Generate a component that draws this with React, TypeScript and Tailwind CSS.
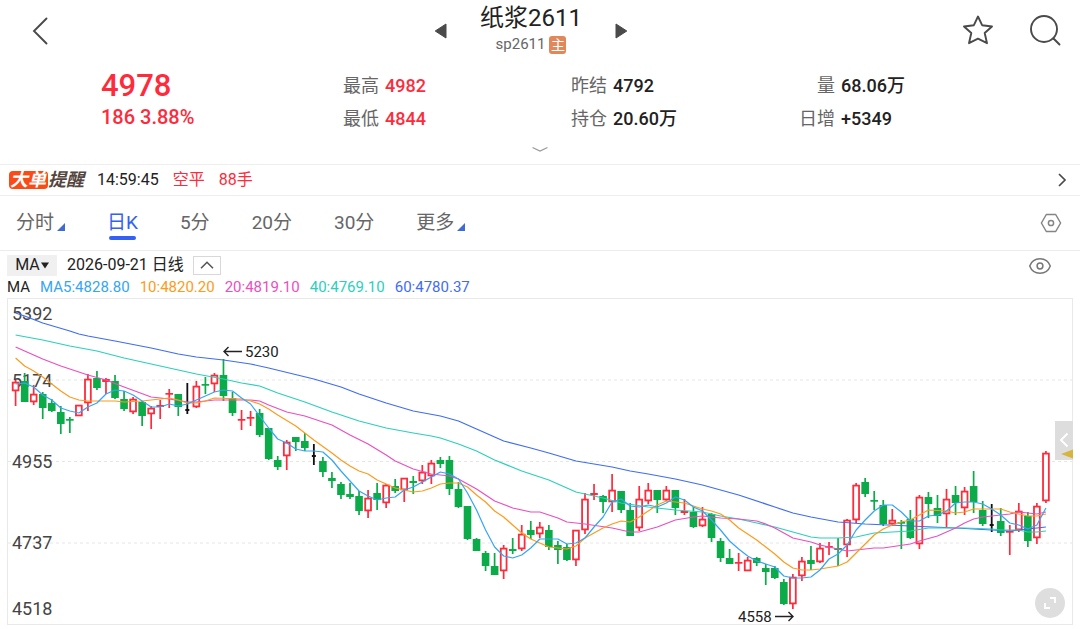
import { useState } from 'react'

type Kind = 'up' | 'down' | 'flat'
// kind, body top, body bottom, high, low
type Candle = [Kind, number, number, number, number]

const RED = '#fe2b3c'
const GREEN = '#0aab48'
const BLACK = '#111111'

const CHART_W = 1066
const CHART_H = 327
const STEP = 9.038
const xAt = (i: number) => 8.6 + i * STEP

const candles: Candle[] = [
  ['up', 84, 93, 82, 108], ['down', 83, 104, 75, 104], ['up', 96, 104, 87, 107], ['down', 96, 110, 94, 121],
  ['down', 105, 113, 101, 114], ['down', 114, 126, 108, 136], ['down', 121, 122, 119, 135], ['up', 107, 118, 107, 118],
  ['up', 81, 105, 76, 113], ['down', 80, 90, 73, 92], ['up', 81, 84, 80, 96], ['down', 83, 100, 77, 101],
  ['down', 101, 111, 93, 113], ['up', 101, 114, 99, 116], ['down', 104, 118, 103, 128], ['up', 110, 116, 108, 131],
  ['up', 107, 109, 102, 121], ['up', 95, 96, 91, 110], ['down', 96, 109, 96, 118], ['flat', 111, 113, 85, 116],
  ['up', 88, 109, 83, 110], ['down', 86, 87, 79, 96], ['up', 77, 86, 75, 94], ['down', 77, 98, 61, 103],
  ['down', 100, 115, 94, 118], ['up', 121, 122, 112, 132], ['up', 119, 120, 113, 128], ['down', 115, 137, 111, 139],
  ['down', 130, 161, 130, 162], ['down', 162, 169, 158, 172], ['up', 144, 158, 142, 172], ['down', 139, 144, 139, 153],
  ['down', 143, 150, 135, 153], ['flat', 157, 159, 146, 167], ['down', 163, 174, 159, 179], ['down', 180, 183, 174, 190],
  ['down', 186, 197, 184, 201], ['down', 196, 199, 185, 201], ['down', 198, 213, 193, 217], ['up', 200, 213, 192, 220],
  ['down', 195, 202, 185, 212], ['up', 187, 205, 186, 210], ['down', 188, 193, 181, 195], ['up', 180, 192, 180, 204],
  ['down', 183, 185, 178, 196], ['up', 174, 183, 167, 186], ['up', 165, 178, 162, 186], ['down', 162, 166, 159, 170],
  ['down', 162, 191, 158, 197], ['down', 191, 209, 184, 210], ['down', 208, 241, 208, 242], ['down', 241, 253, 240, 253],
  ['down', 255, 268, 253, 273], ['down', 268, 277, 255, 277], ['up', 250, 273, 247, 281], ['down', 251, 253, 240, 256],
  ['up', 236, 251, 227, 253], ['down', 232, 237, 223, 241], ['up', 229, 236, 224, 240], ['down', 232, 249, 227, 252],
  ['down', 247, 252, 243, 266], ['down', 249, 262, 246, 263], ['up', 232, 262, 232, 268], ['up', 201, 232, 195, 236],
  ['up', 195, 197, 186, 202], ['down', 198, 204, 197, 215], ['up', 192, 204, 176, 214], ['down', 193, 212, 193, 215],
  ['down', 212, 238, 205, 238], ['up', 201, 230, 188, 233], ['up', 192, 203, 185, 206], ['down', 192, 202, 192, 215],
  ['up', 192, 202, 188, 203], ['down', 192, 210, 192, 217], ['up', 213, 215, 201, 217], ['down', 214, 229, 209, 230],
  ['up', 221, 228, 209, 229], ['down', 216, 240, 215, 244], ['down', 243, 260, 240, 264], ['down', 260, 266, 251, 266],
  ['up', 264, 265, 255, 273], ['up', 262, 273, 259, 273], ['down', 260, 265, 259, 268], ['down', 270, 274, 266, 287],
  ['down', 270, 280, 268, 281], ['down', 284, 306, 281, 307], ['up', 279, 306, 276, 311], ['up', 263, 278, 259, 283],
  ['down', 262, 266, 248, 272], ['up', 250, 264, 245, 265], ['up', 248, 249, 244, 257], ['down', 250, 252, 240, 268],
  ['up', 222, 247, 221, 259], ['up', 187, 222, 185, 225], ['down', 184, 196, 180, 199], ['down', 202, 203, 193, 212],
  ['down', 207, 226, 202, 228], ['up', 222, 226, 211, 228], ['down', 224, 225, 222, 251], ['down', 221, 240, 212, 241],
  ['up', 199, 246, 197, 251], ['down', 199, 206, 194, 220], ['down', 210, 218, 197, 225], ['up', 201, 216, 191, 229],
  ['down', 197, 205, 188, 217], ['up', 193, 210, 189, 217], ['down', 188, 204, 173, 215], ['down', 212, 226, 203, 228],
  ['flat', 226, 228, 206, 234], ['down', 223, 235, 210, 238], ['up', 233, 234, 227, 257], ['up', 213, 232, 205, 234],
  ['down', 218, 243, 214, 249], ['up', 208, 240, 205, 246], ['up', 155, 203, 153, 205],
]

// each average is a list of [candle index, y]
const averages: { color: string; points: number[][] }[] = [
  {
    color: '#3f6cf6',
    points: [[0, 15], [1, 18], [3, 25], [6, 33], [7, 36], [8, 38], [11, 43], [15, 50], [18, 56], [20, 59], [23, 62], [26, 66], [28, 70], [33, 81], [36, 89], [38, 96], [41, 105], [44, 113], [47, 118], [49, 123], [51, 131], [54, 143], [57, 150], [59, 155], [62, 163], [64, 166], [66, 169], [68, 173], [70, 176], [73, 181], [76, 187], [80, 197], [84, 209], [86, 215], [88, 219], [91, 224], [94, 226], [99, 228], [104, 230], [108, 232], [110, 233], [112, 231], [114, 229]],
  },
  {
    color: '#2bd0bb',
    points: [[0, 37], [3, 42], [6, 48], [9, 53], [12, 60], [15, 66], [18, 72], [20, 76], [23, 81], [25, 85], [27, 88], [29, 95], [32, 104], [35, 114], [38, 123], [41, 130], [44, 135], [46, 138], [47, 140], [49, 146], [51, 153], [53, 162], [56, 173], [59, 182], [61, 190], [62, 194], [65, 200], [67, 205], [70, 209], [73, 212], [76, 214], [78, 218], [80, 221], [82, 225], [84, 229], [86, 234], [88, 239], [89, 240], [91, 240], [93, 239], [95, 235], [99, 233], [101, 230], [105, 230], [108, 231], [109, 232], [111, 232], [112, 234], [113, 234], [114, 233]],
  },
  {
    color: '#e950c0',
    points: [[0, 49], [1, 53], [2, 57], [3, 61], [5, 68], [8, 77], [10, 82], [12, 89], [15, 99], [17, 101], [19, 104], [20, 104], [22, 102], [26, 102], [27, 103], [28, 107], [30, 114], [32, 118], [34, 124], [35, 127], [37, 137], [39, 146], [41, 157], [42, 163], [44, 171], [46, 176], [47, 177], [48, 178], [49, 181], [50, 186], [51, 191], [53, 203], [55, 210], [57, 214], [58, 214], [60, 220], [61, 224], [63, 226], [66, 230], [68, 234], [69, 234], [71, 229], [73, 222], [75, 219], [76, 218], [78, 220], [80, 221], [82, 223], [83, 226], [84, 230], [86, 240], [88, 244], [89, 247], [91, 251], [92, 253], [93, 252], [94, 251], [95, 250], [96, 250], [99, 246], [100, 243], [102, 238], [104, 230], [105, 225], [106, 221], [107, 219], [109, 217], [110, 216], [111, 214], [112, 215], [113, 216], [114, 214]],
  },
  {
    color: '#fd9b1b',
    points: [[0, 60], [1, 68], [2, 73], [3, 79], [4, 86], [5, 93], [6, 99], [7, 102], [8, 103], [11, 103], [12, 104], [14, 103], [15, 102], [16, 101], [17, 100], [18, 102], [19, 105], [20, 105], [21, 103], [22, 100], [25, 101], [26, 103], [27, 106], [28, 111], [29, 117], [31, 128], [33, 142], [35, 155], [36, 162], [37, 168], [38, 173], [39, 176], [40, 182], [41, 186], [42, 190], [43, 192], [44, 194], [45, 193], [46, 190], [47, 186], [48, 185], [49, 185], [50, 189], [51, 197], [52, 204], [53, 213], [54, 219], [55, 227], [56, 235], [57, 241], [58, 245], [59, 249], [60, 250], [61, 251], [62, 248], [63, 240], [64, 235], [65, 230], [66, 226], [67, 223], [68, 224], [69, 219], [70, 213], [71, 207], [72, 203], [73, 204], [74, 205], [75, 208], [76, 211], [77, 213], [78, 216], [79, 222], [80, 230], [82, 242], [83, 249], [84, 256], [85, 264], [86, 270], [87, 272], [88, 272], [89, 271], [91, 268], [92, 264], [93, 255], [94, 246], [95, 237], [96, 231], [97, 227], [98, 224], [99, 222], [100, 217], [101, 212], [103, 213], [104, 215], [105, 214], [106, 211], [109, 211], [110, 214], [111, 216], [112, 218], [113, 218], [114, 216]],
  },
  {
    color: '#35a5f7',
    points: [[0, 86], [1, 85], [2, 89], [3, 97], [4, 102], [5, 110], [6, 113], [7, 115], [8, 109], [9, 105], [10, 96], [11, 92], [12, 93], [13, 97], [14, 103], [15, 109], [16, 109], [17, 106], [18, 108], [19, 106], [20, 102], [21, 98], [22, 94], [23, 92], [24, 93], [25, 100], [26, 106], [27, 118], [28, 130], [29, 141], [30, 145], [31, 151], [32, 153], [33, 153], [34, 154], [35, 162], [36, 173], [37, 183], [38, 193], [39, 198], [40, 202], [41, 200], [42, 199], [43, 192], [44, 189], [45, 184], [46, 179], [47, 174], [48, 176], [49, 181], [50, 195], [51, 212], [52, 232], [53, 249], [54, 258], [55, 260], [56, 257], [57, 250], [58, 241], [59, 241], [60, 241], [61, 246], [62, 245], [63, 240], [64, 229], [65, 219], [66, 204], [67, 201], [68, 208], [69, 209], [70, 207], [71, 209], [72, 205], [73, 199], [74, 202], [75, 209], [76, 213], [77, 222], [78, 232], [79, 243], [80, 251], [81, 258], [82, 263], [83, 266], [84, 269], [85, 278], [86, 280], [87, 280], [88, 279], [89, 272], [90, 261], [91, 256], [92, 247], [93, 232], [94, 222], [95, 213], [96, 207], [97, 207], [98, 214], [99, 223], [100, 223], [101, 218], [102, 217], [103, 213], [104, 205], [105, 204], [106, 204], [107, 206], [108, 211], [109, 217], [110, 225], [111, 227], [112, 231], [113, 227], [114, 210]],
  },
]

const priceLabels = [
  { value: '5392', y: 22 },
  { value: '5174', y: 89 },
  { value: '4955', y: 170 },
  { value: '4737', y: 251 },
  { value: '4518', y: 317 },
]

const tabs = [
  { label: '分时', more: true },
  { label: '日K', more: false },
  { label: '5分', more: false },
  { label: '20分', more: false },
  { label: '30分', more: false },
  { label: '更多', more: true },
]

const stats = [
  [
    { label: '最高', value: '4982', tone: 'text-[#fe2b3c]' },
    { label: '最低', value: '4844', tone: 'text-[#fe2b3c]' },
  ],
  [
    { label: '昨结', value: '4792', tone: 'text-[#222222]' },
    { label: '持仓', value: '20.60万', tone: 'text-[#222222]' },
  ],
  [
    { label: '量', value: '68.06万', tone: 'text-[#222222]' },
    { label: '日增', value: '+5349', tone: 'text-[#222222]' },
  ],
]

function CandleMark({ candle, x }: { candle: Candle; x: number }) {
  const [kind, top, bottom, high, low] = candle

  if (kind === 'flat') {
    return (
      <g fill={BLACK}>
        <rect x={x - 0.9} y={high} width={1.8} height={low - high} />
        <rect x={x - 2} y={top} width={4} height={bottom - top} />
      </g>
    )
  }

  const color = kind === 'up' ? RED : GREEN
  const hollow = kind === 'up' && bottom - top > 3

  return (
    <g>
      <rect x={x - 0.85} y={high} width={1.7} height={low - high} fill={color} />
      {hollow ? (
        <rect x={x - 2.9} y={top + 0.6} width={5.8} height={bottom - top - 1.2} fill="#ffffff" stroke={color} strokeWidth={1.8} />
      ) : (
        <rect x={x - 3.8} y={top} width={7.6} height={Math.max(bottom - top, 1.7)} fill={color} />
      )}
    </g>
  )
}

function KLineChart() {
  return (
    <svg viewBox={`0 0 ${CHART_W} ${CHART_H}`} className="block h-auto w-full" role="img" aria-label="日K">
      <rect x={0.5} y={0.5} width={1065} height={326} fill="none" stroke="#e9e9e9" />
      {[82, 163.5, 245].map((y) => (
        <path key={y} d={`M1 ${y}H1065`} stroke="#e6e6e6" strokeWidth={1} strokeDasharray="3 3" />
      ))}

      {priceLabels.map((p) => (
        <text key={p.value} x={5} y={p.y} fontSize={18} fill="#444444">
          {p.value}
        </text>
      ))}

      {candles.map((c, i) => (
        <CandleMark key={i} candle={c} x={xAt(i)} />
      ))}

      {averages.map((line) => (
        <polyline
          key={line.color}
          points={line.points.map(([i, y]) => `${xAt(i)},${y}`).join(' ')}
          fill="none"
          stroke={line.color}
          strokeWidth={1.2}
          strokeLinejoin="round"
        />
      ))}

      {/* highest and lowest price */}
      <g fill="none" stroke="#222222" strokeWidth={1.4}>
        <path d="M235 53.5H217M221.5 49L217 53.5L221.5 58" />
        <path d="M768 318.5H786M781.5 314L786 318.5L781.5 323" />
      </g>
      <text x={238} y={59} fontSize={15} fill="#222222">5230</text>
      <text x={731} y={324} fontSize={15} fill="#222222">4558</text>
    </svg>
  )
}

function Header() {
  return (
    <header className="grid grid-cols-[1fr_auto_1fr] items-center pt-1 pr-[18px]">
      <button aria-label="返回" className="ml-7 justify-self-start">
        <svg width="24" height="32" viewBox="0 0 24 32" fill="none" stroke="#4a4a4a" strokeWidth="1.9" strokeLinecap="round">
          <path d="M18.500 3.500L6 16L18.500 28.500" />
        </svg>
      </button>
      <div className="flex items-center gap-[32px]">
        <button aria-label="上一个">
          <svg width="14" height="16" viewBox="0 0 14 16" fill="#4a4a4a">
            <path d="M1.200 8L12 1V15Z" stroke="#4a4a4a" strokeWidth="1" strokeLinejoin="round" />
          </svg>
        </button>
        <div className="flex flex-col items-center">
          <h1 className="text-2xl leading-7 text-[#222222]">纸浆2611</h1>
          <p className="flex items-center gap-1 text-[15px] leading-[25px] text-[#666666]">
            sp2611
            <span className="flex h-[18px] w-[17px] items-center justify-center rounded-[3px] bg-[#e2875a] text-sm text-white">主</span>
          </p>
        </div>
        <button aria-label="下一个">
          <svg width="14" height="16" viewBox="0 0 14 16" fill="#4a4a4a">
            <path d="M12.800 8L2 1V15Z" stroke="#4a4a4a" strokeWidth="1" strokeLinejoin="round" />
          </svg>
        </button>
      </div>
      <div className="flex items-center gap-[34px] justify-self-end">
        <button aria-label="自选">
          <svg width="32" height="32" viewBox="0 0 32 32" fill="none" stroke="#4a4a4a" strokeWidth="1.900" strokeLinejoin="round">
            <path d="M16 1.500L20.100 10.200L30 11.500L22.700 18L25 28.200L16 23.700L7 28.200L9.300 18L2 11.500L11.900 10.200Z" />
          </svg>
        </button>
        <button aria-label="搜索">
          <svg width="34" height="34" viewBox="0 0 34 34" fill="none" stroke="#4a4a4a" strokeWidth="1.900" strokeLinecap="round">
            <circle cx="16" cy="15" r="13" />
            <path d="M25.500 24.500L31.500 30.500" />
          </svg>
        </button>
      </div>
    </header>
  )
}

export default function App() {
  const [active, setActive] = useState('日K')

  return (
    <main className="w-full bg-white font-['Roboto','Noto_Sans_CJK_SC',sans-serif] text-[#222222]">
      <Header />

      <section className="grid grid-cols-[242fr_228fr_228fr_281fr] pt-3 pl-[101px]">
        <div className="font-medium text-[#fe2b3c]">
          <div className="text-[31px] leading-[34px]">4978</div>
          <div className="text-xl leading-7">186 3.88%</div>
        </div>
        {stats.map((col) => (
          <dl key={col[0].label}>
            {col.map((s) => (
              <div key={s.label} className="flex gap-[6px] text-lg leading-[33px]">
                <dt className="w-9 text-right text-[#666666]">{s.label}</dt>
                <dd className={`font-medium ${s.tone}`}>{s.value}</dd>
              </div>
            ))}
          </dl>
        ))}
      </section>

      <button aria-label="展开" className="mx-auto flex h-[29px] w-10 items-center justify-center">
        <svg width="18" height="8" viewBox="0 0 18 8" fill="none" stroke="#999999" strokeWidth="1.200">
          <path d="M1.500 1.500L9 5L16.500 1.500" />
        </svg>
      </button>

      <a href="#orders" className="flex h-8 items-center border-t border-b border-[#eeeeee] pr-[9px] pl-[9px] text-base">
        <span className="flex items-center text-lg leading-[18px] font-bold italic">
          <span className="rounded-[4px] bg-[#fb4a16] pr-[2px] pl-[1px] text-white">大单</span>
          <span className="text-[#54463f]">提醒</span>
        </span>
        <time className="ml-[13px]">14:59:45</time>
        <span className="ml-[14px] text-[#fe2b3c]">空平</span>
        <span className="ml-[14px] text-[#fe2b3c]">88手</span>
        <svg className="ml-auto" width="18" height="18" viewBox="0 0 18 18" fill="none" stroke="#4a4a4a" strokeWidth="1.700">
          <path d="M6 3L12 9L6 15" />
        </svg>
      </a>

      <nav className="flex h-[55px] items-center border-b border-[#ececec] pr-[18px] pl-4">
        <div className="flex gap-[42px]">
          {tabs.map((t) => (
            <button
              key={t.label}
              onClick={() => setActive(t.label)}
              className={`relative flex items-end gap-[3px] text-[19px] leading-8 ${active === t.label ? 'text-[#3460f5]' : 'text-[#666666]'}`}
            >
              {t.label}
              {t.more && (
                <svg className="mb-2" width="8" height="8" viewBox="0 0 8 8" fill="#4169d8">
                  <path d="M8 0V8H0Z" />
                </svg>
              )}
              {active === t.label && <span className="absolute inset-x-[2px] -bottom-[1px] h-1 rounded-full bg-[#3460f5]" />}
            </button>
          ))}
        </div>
        <button aria-label="设置" className="ml-auto">
          <svg width="22" height="20" viewBox="0 0 22 20" fill="none" stroke="#858585" strokeWidth="1.500" strokeLinejoin="round">
            <path d="M6.300 1.500H15.700L20.600 10L15.700 18.500H6.300L1.400 10Z" />
            <circle cx="11" cy="10" r="2.600" />
          </svg>
        </button>
      </nav>

      <section className="px-[7px]">
        <div className="flex items-center pt-[2px] pr-[21px]">
          <button className="flex h-[21px] w-[50px] items-center justify-center gap-[1px] bg-[#f0f0f0] text-base">
            MA
            <svg width="8" height="7" viewBox="0 0 8 7" fill="#222222">
              <path d="M0 .5H8L4 6.500Z" />
            </svg>
          </button>
          <span className="ml-[10px] text-base leading-6">2026-09-21 日线</span>
          <button aria-label="收起" className="ml-[9px] flex h-[19px] w-7 items-center justify-center border border-[#d8d8d8]">
            <svg width="14" height="8" viewBox="0 0 14 8" fill="none" stroke="#555555" strokeWidth="1.500">
              <path d="M1 7.300L7 1.200L13 7.300" />
            </svg>
          </button>
          <button aria-label="显示" className="ml-auto">
            <svg width="24" height="20" viewBox="0 0 24 20" fill="none" stroke="#777777" strokeWidth="1.500">
              <path d="M1.700 11C3.500 6.200 7.300 3.800 12 3.800S20.500 6.200 22.300 11C20.500 15.800 16.700 18.200 12 18.200S3.500 15.800 1.700 11Z" />
              <circle cx="12" cy="11" r="2.900" />
            </svg>
          </button>
        </div>

        <div className="flex gap-[10px] text-[15px] leading-[21px]">
          <span>MA</span>
          <span className="text-[#35a5f7]">MA5:4828.80</span>
          <span className="text-[#fd9b1b]">10:4820.20</span>
          <span className="text-[#e950c0]">20:4819.10</span>
          <span className="text-[#2bd0bb]">40:4769.10</span>
          <span className="text-[#3f6cf6]">60:4780.37</span>
        </div>

        <div className="relative">
          <KLineChart />
          <button aria-label="打开侧栏" className="absolute top-[37.5%] right-0 flex h-[39px] w-[18px] items-center justify-center bg-[#dddddd]">
            <svg width="10" height="16" viewBox="0 0 10 16" fill="none" stroke="#ffffff" strokeWidth="1.900">
              <path d="M8.500 1.500L2 8L8.500 14.500" />
            </svg>
            <svg className="absolute right-0 bottom-[1px]" width="12" height="10" viewBox="0 0 12 10" fill="#d5b53d">
              <path d="M12 .5V9.500L0 5Z" />
            </svg>
          </button>
          <button aria-label="全屏" className="absolute right-2 bottom-[7px] flex size-[30px] items-center justify-center rounded-full bg-[#dedede]">
            <svg width="12" height="12" viewBox="0 0 12 12" fill="none" stroke="#ffffff" strokeWidth="1.800">
              <path d="M6 1H11V6M1 6V11H6" />
            </svg>
          </button>
        </div>
      </section>
    </main>
  )
}
